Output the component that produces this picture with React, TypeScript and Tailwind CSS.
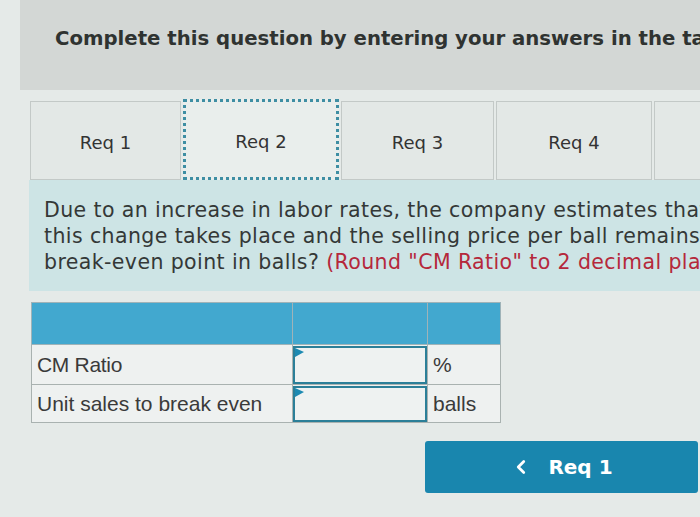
import { ChevronLeft } from "lucide-react";

const tabs = [
  { label: "Req 1", w: "w-[151px]", active: false },
  { label: "Req 2", w: "w-[156px]", active: true },
  { label: "Req 3", w: "w-[153px]", active: false },
  { label: "Req 4", w: "w-[156px]", active: false },
  { label: "", w: "w-[60px]", active: false },
];

function Flag() {
  return (
    <svg className="absolute left-0 top-0" width="9" height="10" viewBox="0 0 9 10">
      <path d="M0 0 L9 4 L0 9 Z" fill="#1c8ab2" />
    </svg>
  );
}

export default function App() {
  return (
    <div className="w-[700px] h-[517px] overflow-hidden bg-[#e5eae8] text-[#333]">
      {/* Header */}
      <div className="ml-[20px] h-[90px] bg-[#d3d7d5] pl-[35px] pt-[24px] overflow-hidden whitespace-nowrap">
        <h1 className="text-[19.7px] font-bold text-[#2f3331] font-['DejaVu_Sans',sans-serif]">
          Complete this question by entering your answers in the tabs below.
        </h1>
      </div>

      {/* Tabs */}
      <div className="ml-[30px] mt-[9px] flex items-end gap-[2px] whitespace-nowrap">
        {tabs.map((t, i) => (
          <div
            key={i}
            className={
              t.active
                ? `${t.w} shrink-0 h-[81px] flex items-center justify-center pt-[3px] bg-[#e9eeec] border-[3px] border-dotted border-[#3e8ea3] text-[18px] font-['DejaVu_Sans',sans-serif]`
                : `${t.w} shrink-0 h-[79px] flex items-center justify-center pt-[3px] bg-[#e3e8e6] border border-[#c3c9c7] text-[18px] font-['DejaVu_Sans',sans-serif]`
            }
          >
            {t.label}
          </div>
        ))}
      </div>

      {/* Question */}
      <div className="ml-[29px] h-[111px] bg-[#cde4e5] pl-[15px] pt-[17px] overflow-hidden whitespace-nowrap text-[20.5px] tracking-[0.4px] leading-[26px] text-[#343837] font-['DejaVu_Sans',sans-serif]">
        <p>Due to an increase in labor rates, the company estimates that variable expenses will increase by</p>
        <p>this change takes place and the selling price per ball remains constant at $25.00, what will be the new</p>
        <p>
          break-even point in balls?{" "}
          <span className="text-[#b5283b]">(Round "CM Ratio" to 2 decimal places and the final answer)</span>
        </p>
      </div>

      {/* Table */}
      <table className="ml-[31px] mt-[11px] border-collapse font-['Liberation_Sans',sans-serif] text-[21px] text-[#3a3a3a]">
        <tbody>
          <tr className="h-[42px] bg-[#42a8cf]">
            <td className="w-[261px] border border-[#9fb3b8]"></td>
            <td className="w-[135px] border border-[#9fb3b8]"></td>
            <td className="w-[73px] border border-[#9fb3b8]"></td>
          </tr>
          <tr className="h-[40px] bg-[#eef1f0]">
            <td className="border border-[#a9b2b0] px-[5px] tracking-[-0.3px]">CM Ratio</td>
            <td className="border border-[#a9b2b0] p-0">
              <div className="relative h-[38px] border-2 border-[#2b7f98] bg-[#eef2f1]">
                <Flag />
              </div>
            </td>
            <td className="border border-[#a9b2b0] px-[5px]">%</td>
          </tr>
          <tr className="h-[38px] bg-[#eef1f0]">
            <td className="border border-[#a9b2b0] px-[5px]">Unit sales to break even</td>
            <td className="border border-[#a9b2b0] p-0">
              <div className="relative h-[36px] border-2 border-[#2b7f98] bg-[#eef2f1]">
                <Flag />
              </div>
            </td>
            <td className="border border-[#a9b2b0] px-[5px]">balls</td>
          </tr>
        </tbody>
      </table>

      {/* Nav */}
      <div className="ml-[425px] mt-[18px]">
        <button className="w-[273px] h-[52px] rounded-[3px] bg-[#1986ae] text-white flex items-center justify-center gap-[16px] font-['DejaVu_Sans',sans-serif] font-bold text-[20px]">
          <ChevronLeft size={22} strokeWidth={3} />
          <span>Req 1</span>
        </button>
      </div>
    </div>
  );
}
